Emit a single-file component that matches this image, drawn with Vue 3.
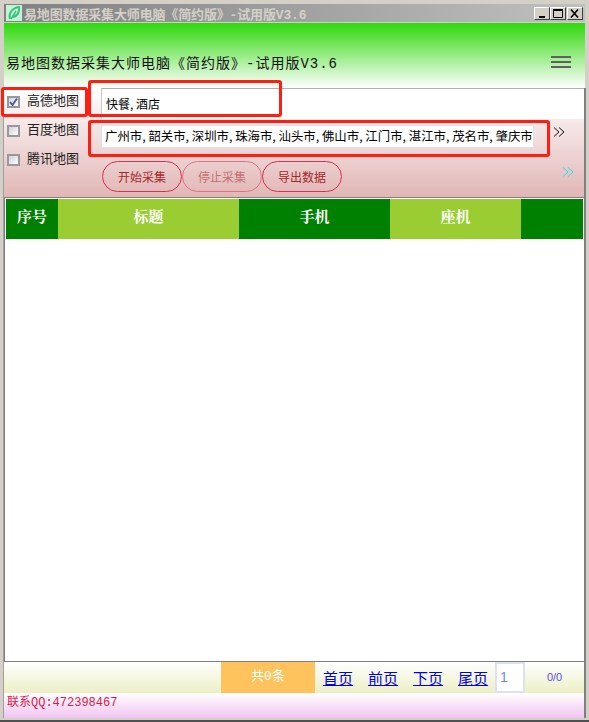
<template>
  <div class="window">
    <div class="titlebar">
      <svg class="app-icon" width="16" height="16" viewBox="0 0 16 16">
        <rect width="16" height="16" fill="#c5f2d5" />
        <path d="M4 14C2 9 6 3 13 2C14 7 11 12 6 12" fill="none" stroke="#3dbf80" stroke-width="2" />
        <path d="M5 14L10 6" stroke="#3dbf80" stroke-width="1.5" />
      </svg>
      <span class="title-text">{{ appTitle }}</span>
      <div class="win-btns">
        <button class="win-btn"><svg width="14" height="11" viewBox="0 0 14 11"><rect x="4" y="8" width="6" height="2" fill="#000" /></svg></button>
        <button class="win-btn"><svg width="14" height="11" viewBox="0 0 14 11"><path d="M2.5 1.5H11.5V9.5H2.5Z" fill="none" stroke="#000" /><rect x="2" y="1" width="10" height="2" fill="#000" /></svg></button>
        <button class="win-btn close"><svg width="14" height="11" viewBox="0 0 14 11"><path d="M3 1.5L10 9.5M10 1.5L3 9.5" stroke="#000" stroke-width="1.6" /></svg></button>
      </div>
    </div>

    <header class="head">
      <span class="head-title">{{ appTitle }}</span>
      <div class="burger"><i></i><i></i><i></i></div>
    </header>

    <div class="body-area">
      <section class="panel">
        <div class="maps">
          <label v-for="m in maps" :key="m.name" class="map">
            <span class="check">
              <svg v-if="m.on" width="9" height="8" viewBox="0 0 9 8"><path d="M1 4L3.5 7L8 0.5" fill="none" stroke="#4a5a9c" stroke-width="1.8" /></svg>
            </span>
            {{ m.name }}
          </label>
        </div>
        <div class="form">
          <div class="keyword-row">快餐, 酒店</div>
          <div class="city-row">
            <div class="city-box">{{ cities }}</div>
            <svg class="more" width="12" height="10" viewBox="0 0 12 10"><path d="M1 0.5L6 5L1 9.5M6 0.5L11 5L6 9.5" fill="none" stroke="#111" /></svg>
          </div>
          <div class="action-row">
            <button class="pill">开始采集</button>
            <button class="pill off">停止采集</button>
            <button class="pill">导出数据</button>
            <svg class="more next" width="12" height="10" viewBox="0 0 12 10"><path d="M1 0.5L6 5L1 9.5M6 0.5L11 5L6 9.5" fill="none" stroke="#19e6e6" /></svg>
          </div>
        </div>
        <div class="mark mark-map"></div>
        <div class="mark mark-key"></div>
        <div class="mark mark-city"></div>
      </section>

      <main class="table-wrap">
        <div class="thead">
          <div v-for="c in columns" :key="c.label" class="th" :class="c.color" :style="{ width: c.width + 'px' }">{{ c.label }}</div>
        </div>
      </main>

      <div class="pager">
        <div class="total">共0条</div>
        <nav class="links">
          <a v-for="l in links" :key="l">{{ l }}</a>
        </nav>
        <div class="page-input">1</div>
        <div class="page-count">0/0</div>
      </div>

      <footer class="contact">联系QQ:472398467</footer>
    </div>
  </div>
</template>

<script setup>
const appTitle = '易地图数据采集大师电脑《简约版》-试用版V3.6'
const cities = '广州市, 韶关市, 深圳市, 珠海市, 汕头市, 佛山市, 江门市, 湛江市, 茂名市, 肇庆市'

const maps = [
  { name: '高德地图', on: true },
  { name: '百度地图', on: false },
  { name: '腾讯地图', on: false }
]

const columns = [
  { label: '序号', width: 52, color: 'green' },
  { label: '标题', width: 181, color: 'lime' },
  { label: '手机', width: 151, color: 'green' },
  { label: '座机', width: 131, color: 'lime' },
  { label: '', width: 62, color: 'green' }
]

const links = ['首页', '前页', '下页', '尾页']
</script>

<style>
html, body {
  margin: 0;
  background: #d4d0c8;
}
</style>

<style scoped>
.window {
  width: 589px;
  height: 722px;
  box-sizing: border-box;
  padding: 4px 3px 2px 3px;
  background: #d4d0c8;
  border-bottom: 2px solid #505050;
  display: flex;
  flex-direction: column;
  font-family: "Noto Sans CJK SC", "Liberation Sans", sans-serif;
  overflow: hidden;
}

.titlebar {
  height: 18px;
  flex: none;
  display: flex;
  align-items: center;
  gap: 2px;
  margin: 0 1px 1px;
  padding: 0 2px;
  background: linear-gradient(90deg, #808080, #c0c0c0);
}

.app-icon {
  flex: none;
}

.title-text {
  color: #d4d0c8;
  font: bold 13px "Liberation Mono", "Noto Sans CJK SC", monospace;
  white-space: nowrap;
  letter-spacing: -0.15px;
}

.win-btns {
  margin-left: auto;
  display: flex;
}

.win-btn {
  width: 16px;
  height: 13px;
  padding: 0;
  background: #d4d0c8;
  border: 1px solid;
  border-color: #fff #404040 #404040 #fff;
  display: flex;
  align-items: center;
  justify-content: center;
}

.win-btn.close {
  margin-left: 1px;
}

.head {
  height: 65px;
  flex: none;
  display: flex;
  align-items: center;
  justify-content: space-between;
  margin: 0 1px;
  padding: 13px 14px 0 2px;
  box-sizing: border-box;
  background: linear-gradient(#2fd80c, #fff);
}

.head-title {
  font: 14px "Liberation Mono", "Noto Sans CJK SC", monospace;
  letter-spacing: 1px;
  color: #111;
  white-space: nowrap;
}

.burger {
  width: 20px;
  display: flex;
  flex-direction: column;
  gap: 3px;
}

.burger i {
  height: 2px;
  background: #606060;
}

.body-area {
  flex: 1;
  min-height: 0;
  display: flex;
  flex-direction: column;
  border-left: 1px solid #a0a0a0;
  border-right: 2px solid #808080;
}

.panel {
  position: relative;
  height: 109px;
  flex: none;
  display: flex;
  background: linear-gradient(#fff, #e2b6b6);
}

.maps {
  width: 97px;
  flex: none;
  margin-top: -1px;
  display: flex;
  flex-direction: column;
  gap: 5px;
}

.map {
  height: 24px;
  display: flex;
  align-items: center;
  gap: 7px;
  padding-left: 3px;
  font-size: 13px;
  color: #222;
}

.check {
  width: 13px;
  height: 12px;
  margin-top: 6px;
  box-sizing: border-box;
  border: 2px solid #999;
  background: linear-gradient(135deg, #d0d0d8, #fff);
  display: flex;
}

.form {
  flex: 1;
  min-width: 0;
}

.keyword-row {
  height: 31px;
  box-sizing: border-box;
  padding: 6px 0 0 4px;
  background: #fff;
  border-top: 1px solid #b0b0b0;
  border-left: 1px solid #c8c8c8;
  font-size: 12px;
  line-height: 18px;
}

.city-row {
  height: 38px;
  box-sizing: border-box;
  padding-top: 6px;
  display: flex;
  align-items: flex-start;
  gap: 19px;
}

.city-box {
  width: 433px;
  height: 23px;
  box-sizing: border-box;
  background: #fff;
  border: 1px solid #dde3ee;
  font-size: 12.4px;
  line-height: 21px;
  padding-left: 3px;
  white-space: nowrap;
  overflow: hidden;
}

.more {
  flex: none;
  margin-top: 2px;
}

.action-row {
  height: 40px;
  display: flex;
  align-items: flex-start;
  padding: 4px 0 0 1px;
  box-sizing: border-box;
}

.pill {
  width: 80px;
  height: 31px;
  box-sizing: border-box;
  border: 1px solid #d8304e;
  border-radius: 16px;
  background: transparent;
  color: #a5282a;
  font: 12px "Noto Sans CJK SC", sans-serif;
  padding: 0;
}

.pill.off {
  border-color: #de7388;
  color: #c47070;
}

.more.next {
  margin: 6px 0 0 220px;
}

.mark {
  position: absolute;
  box-sizing: border-box;
  border: 3px solid #fe1f12;
  border-radius: 3px;
}

.mark-map {
  left: -3px;
  top: -1px;
  width: 87px;
  height: 30px;
}

.mark-key {
  left: 84px;
  top: -8px;
  width: 194px;
  height: 37px;
}

.mark-city {
  left: 84px;
  top: 32px;
  width: 462px;
  height: 37px;
}

.table-wrap {
  flex: 1;
  min-height: 0;
  background: #fff;
  border-top: 1px solid #808080;
  border-left: 1px solid #808080;
  border-bottom: 1px solid #808080;
  padding: 1px 0 0 1px;
}

.thead {
  display: flex;
  height: 40px;
}

.th {
  flex: none;
  box-sizing: border-box;
  padding-bottom: 8px;
  color: #fff;
  font: bold 15px "Noto Serif CJK SC", "Noto Sans CJK SC", sans-serif;
  display: flex;
  align-items: center;
  justify-content: center;
}

.green {
  background: #008000;
}

.lime {
  background: #9acd32;
}

.pager {
  height: 31px;
  flex: none;
  display: flex;
  background: linear-gradient(#fff, #ecefc4);
}

.total {
  width: 94px;
  margin-left: 217px;
  background: #fec35c;
  color: #fff;
  font: 13px "Liberation Mono", "Noto Sans CJK SC", monospace;
  line-height: 29px;
  text-align: center;
}

.links {
  display: flex;
  gap: 15px;
  padding: 0 0 0 8px;
  align-items: center;
}

.links a {
  color: #0000ee;
  font-size: 15px;
  line-height: 20px;
  text-decoration: underline;
}

.page-input {
  width: 30px;
  height: 31px;
  box-sizing: border-box;
  margin-left: 7px;
  background: #fff;
  border: 2px solid #dde3ee;
  color: #6a8fe0;
  font: 14px "Liberation Sans", sans-serif;
  line-height: 27px;
  padding-left: 3px;
}

.page-count {
  flex: 1;
  text-align: center;
  color: #5a4df0;
  font: 11px "Liberation Sans", sans-serif;
  line-height: 30px;
}

.contact {
  height: 25px;
  flex: none;
  background: linear-gradient(#fff, #f0c4f0);
  color: #e0184a;
  font: 12px "Liberation Mono", "Noto Sans CJK SC", monospace;
  line-height: 20px;
  padding-left: 3px;
}
</style>
